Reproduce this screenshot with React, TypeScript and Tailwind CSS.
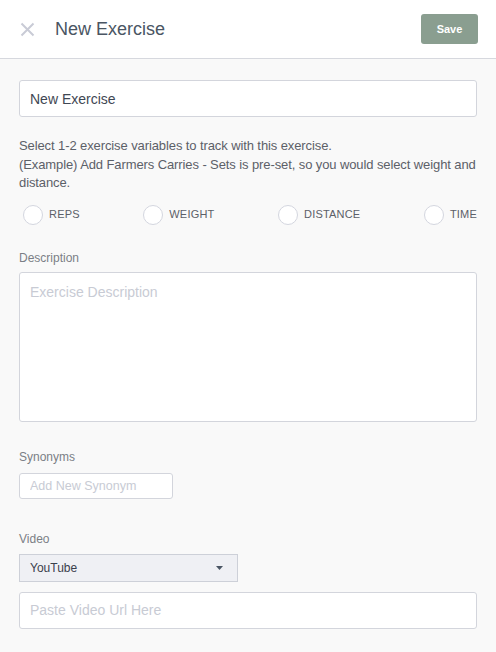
import { useState } from "react";

const variables = ["REPS", "WEIGHT", "DISTANCE", "TIME"];

export default function App() {
    const [name, setName] = useState("New Exercise");
    const [selected, setSelected] = useState<string[]>([]);

    const toggle = (v: string) =>
        setSelected((s) => (s.includes(v) ? s.filter((x) => x !== v) : [...s, v]));

    return (
        <div
            className="min-h-[652px] w-full bg-[#f9f9f9] text-[#4b5360]"
            style={{ fontFamily: "'Liberation Sans', Arial, sans-serif" }}
        >
            {/* Header */}
            <header className="h-[59px] bg-white border-b border-[#d6d8de] flex items-center pl-[19px] pr-[18px]">
                <button className="w-[16px] h-[16px] flex items-center justify-center">
                    <svg width="15" height="15" viewBox="0 0 15 15" fill="none">
                        <path d="M1.5 1.5L13.5 13.5M13.5 1.5L1.5 13.5" stroke="#c9cbd6" strokeWidth="2" />
                    </svg>
                </button>
                <h1 className="ml-[20px] text-[18px] text-[#4a5563]">New Exercise</h1>
                <button className="ml-auto w-[57px] h-[30px] rounded-[3px] bg-[#8a9e90] text-white text-[11px] font-bold">
                    Save
                </button>
            </header>

            {/* Body */}
            <main className="px-[19px] pt-[21px] pb-6">
                <input
                    value={name}
                    onChange={(e) => setName(e.target.value)}
                    className="w-full h-[37px] bg-white border border-[#d3d5dc] rounded-[3px] px-[10px] text-[14px] text-[#3f4753] outline-none"
                />

                <p className="mt-[20px] text-[13px] leading-[18.5px] tracking-[-0.1px] text-[#5c6068]">
                    Select 1-2 exercise variables to track with this exercise.
                    <br />
                    (Example) Add Farmers Carries - Sets is pre-set, so you would select weight and distance.
                </p>

                <div className="mt-[12px] flex items-center justify-between pl-[4px]">
                    {variables.map((v) => (
                        <label key={v} className="flex items-center gap-[6px] cursor-pointer" onClick={() => toggle(v)}>
                            <span
                                className={
                                    selected.includes(v)
                                        ? "w-[20px] h-[20px] rounded-full border-[6px] border-[#8a9e90] bg-white"
                                        : "w-[20px] h-[20px] rounded-full border border-[#d4d6df] bg-white"
                                }
                            />
                            <span className="text-[11px] text-[#5c6068] tracking-[0.2px]">{v}</span>
                        </label>
                    ))}
                </div>

                <div className="mt-[24px] text-[12px] text-[#7b7f86]">Description</div>
                <textarea
                    placeholder="Exercise Description"
                    className="mt-[5px] block w-full h-[150px] resize-none bg-white border border-[#d3d5dc] rounded-[3px] px-[10px] pt-[9px] text-[14px] text-[#3f4753] placeholder:text-[#c8cbd4] outline-none"
                />

                <div className="mt-[26px] text-[12px] text-[#7b7f86]">Synonyms</div>
                <input
                    placeholder="Add New Synonym"
                    className="mt-[7px] block w-[154px] h-[26px] bg-white border border-[#d3d5dc] rounded-[3px] px-[10px] text-[12.5px] placeholder:text-[#c8cbd4] outline-none"
                />

                <div className="mt-[31px] text-[12px] text-[#7b7f86]">Video</div>
                <div className="mt-[6px] w-[219px] h-[28px] bg-[#eff0f4] border border-[#cdd0d8] flex items-center pl-[10px] pr-[14px]">
                    <span className="text-[12px] text-[#3a414c]">YouTube</span>
                    <svg className="ml-auto" width="7" height="4" viewBox="0 0 7 4">
                        <path d="M0 0H7L3.5 4Z" fill="#4a5563" />
                    </svg>
                </div>
                <input
                    placeholder="Paste Video Url Here"
                    className="mt-[10px] block w-full h-[37px] bg-white border border-[#d3d5dc] rounded-[3px] px-[10px] text-[14px] placeholder:text-[#c8cbd4] outline-none"
                />
            </main>
        </div>
    );
}
